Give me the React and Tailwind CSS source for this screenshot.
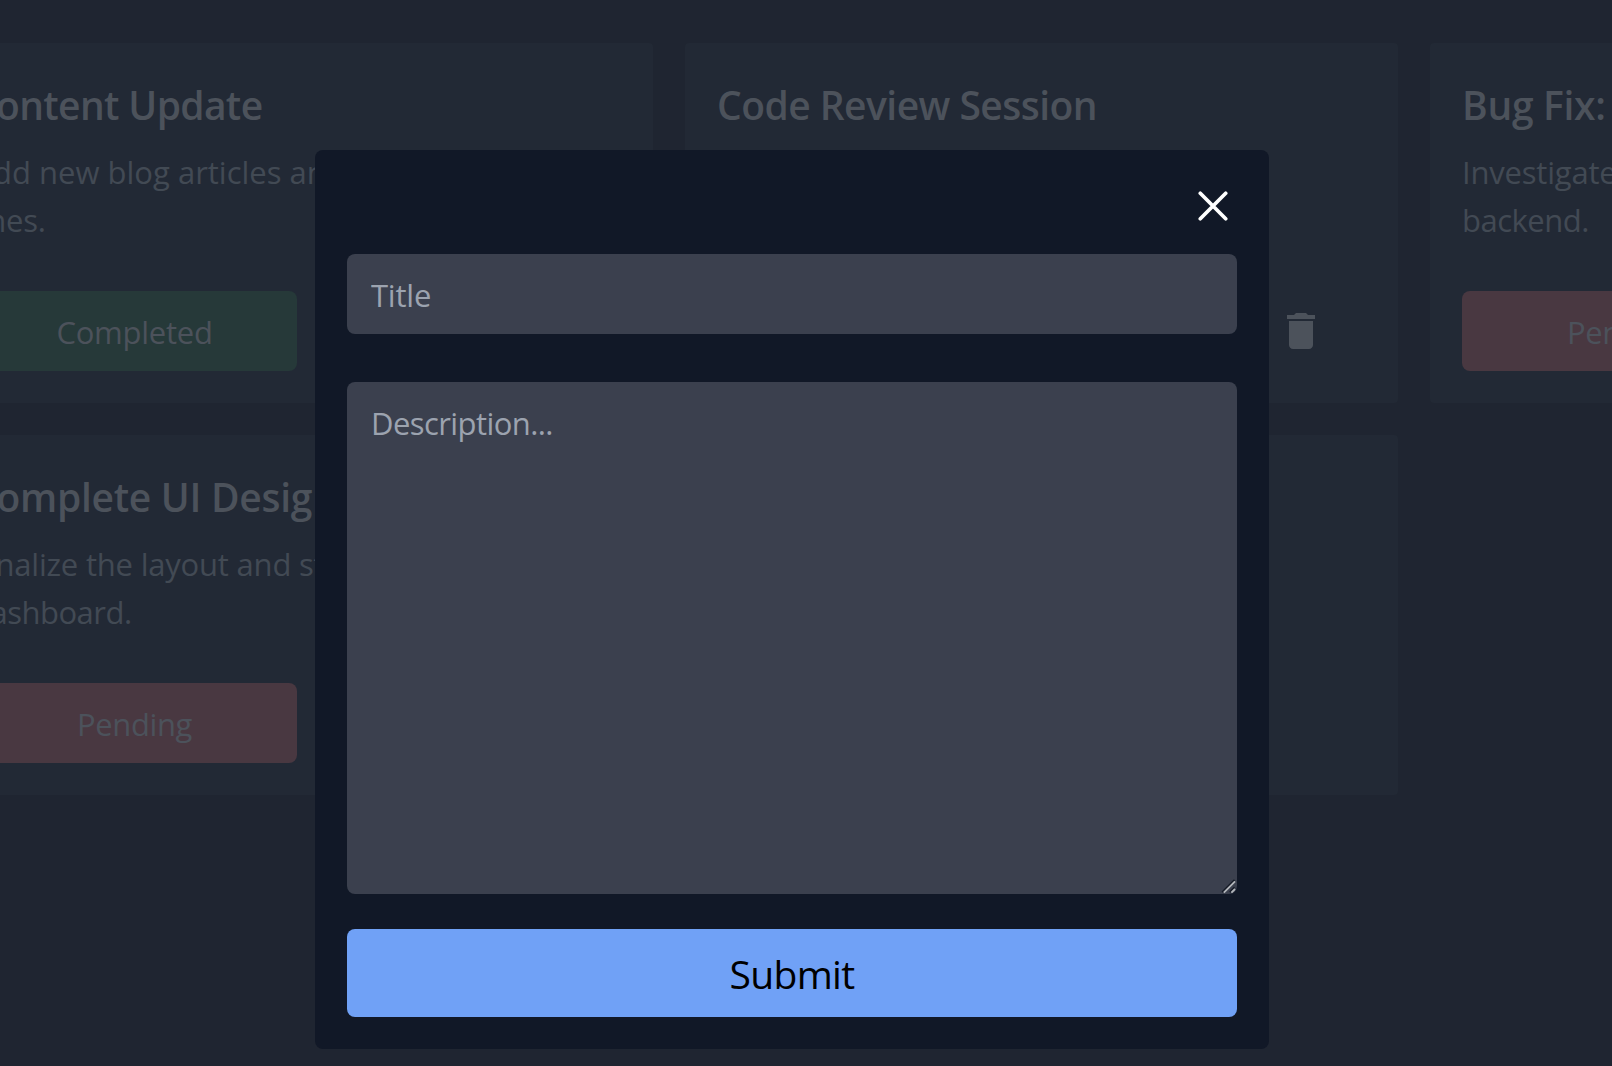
import { MdDelete } from "react-icons/md";

const cards = [
  {
    title: "Content Update",
    titleClass: "tracking-[-0.65px]",
    lines: ["Add new blog articles and", "lines."],
    lineClasses: ["pl-[1.5px]", "tracking-[-0.2px]"],
    status: "Completed",
    done: true,
  },
  {
    title: "Code Review Session",
    titleClass: "tracking-[-0.54px]",
    lines: ["", ""],
    lineClasses: ["", ""],
    status: "Completed",
    done: true,
  },
  {
    title: "Bug Fix:",
    titleClass: "tracking-[-0.3px]",
    lines: ["Investigate", "backend."],
    lineClasses: ["tracking-[-0.2px]", "tracking-[-0.5px]"],
    status: "Pending",
    done: false,
  },
  {
    title: "Complete UI Design",
    titleClass: "tracking-[-0.28px]",
    lines: ["Finalize the layout and styling", "dashboard."],
    lineClasses: ["tracking-[-0.2px]", "tracking-[-0.5px]"],
    status: "Pending",
    done: false,
  },
];

function Card({ card }) {
  return (
    <article className="flex h-[360px] flex-col rounded bg-[#222935] p-8">
      <h2 className={`h-14 pt-[2px] text-[39px] leading-[56px] font-semibold whitespace-nowrap text-[#4c525b] ${card.titleClass}`}>
        {card.title}
      </h2>
      <div className="mt-[17px] h-24 text-[31px] leading-[48px] whitespace-nowrap text-[#424a54]">
        <p className={`h-12 ${card.lineClasses[0]}`}>{card.lines[0]}</p>
        <p className={`h-12 ${card.lineClasses[1]}`}>{card.lines[1]}</p>
      </div>
      <div className="mt-[47px] flex h-20 items-center justify-between">
        <span
          className={
            card.done
              ? "flex h-20 w-[325px] items-center justify-center rounded-lg bg-[#263939] pt-[2px] text-[31px] tracking-[-0.25px] text-[#4c525b]"
              : "flex h-20 w-[325px] items-center justify-center rounded-lg bg-[#493841] pt-[2px] text-[31px] tracking-[-0.4px] text-[#4c525b]"
          }
        >
          {card.status}
        </span>
        <MdDelete className="mr-[41px] size-12 text-[#4c525b]" />
      </div>
    </article>
  );
}

function ResizeGrip() {
  return (
    <svg viewBox="0 0 16 16" className="pointer-events-none absolute right-0 bottom-0 size-4" fill="none" strokeWidth="1.8">
      <path d="M1.200 14.200L13.600 1.800M8.800 14.200L13.600 9.400" stroke="#151a26" />
      <path d="M2.800 14.600L14 3.400M10.400 14.600L14 11" stroke="#b4b7bc" />
    </svg>
  );
}

export default function App() {
  return (
    <div className="relative h-[1066px] w-[1612px] overflow-hidden bg-[#1f2531] font-['Open_Sans','Noto_Sans',sans-serif]">
      <main className="-ml-[60px] grid w-[2203px] grid-cols-3 gap-8 pt-[43px]">
        {cards.map((card, i) => (
          <Card key={i} card={card} />
        ))}
        <article className="h-[360px] rounded bg-[#222935]" />
      </main>
      <div className="absolute top-[150px] left-[315px] flex h-[899px] w-[954px] flex-col rounded-lg bg-[#111827] p-8">
        <button aria-label="Close" className="mt-[9px] mr-[9px] self-end">
          <svg viewBox="0 0 30 30" className="size-[30px]" fill="none" stroke="#fff" strokeWidth="3.700" strokeLinecap="round">
            <path d="M2.300 2.300l25.400 25.400M27.700 2.300L2.300 27.700" />
          </svg>
        </button>
        <input
          placeholder="Title"
          className="mt-[33px] h-20 w-full rounded-lg bg-[#3b404e] px-6 pt-[2px] text-[31px] tracking-[-0.2px] placeholder:text-[#9ca3af]"
        />
        <div className="relative mt-12 h-[512px]">
          <textarea
            placeholder="Description..."
            className="block h-full w-full resize-none rounded-lg bg-[#3b404e] px-6 pt-[17px] text-[31px] leading-[48px] tracking-[-0.58px] placeholder:text-[#9ca3af]"
          />
          <ResizeGrip />
        </div>
        <button className="mt-[35px] h-[88px] w-full rounded-lg bg-[#70a1f6] pt-[2px] text-[39px] tracking-[-0.65px] text-black">
          Submit
        </button>
      </div>
    </div>
  );
}
